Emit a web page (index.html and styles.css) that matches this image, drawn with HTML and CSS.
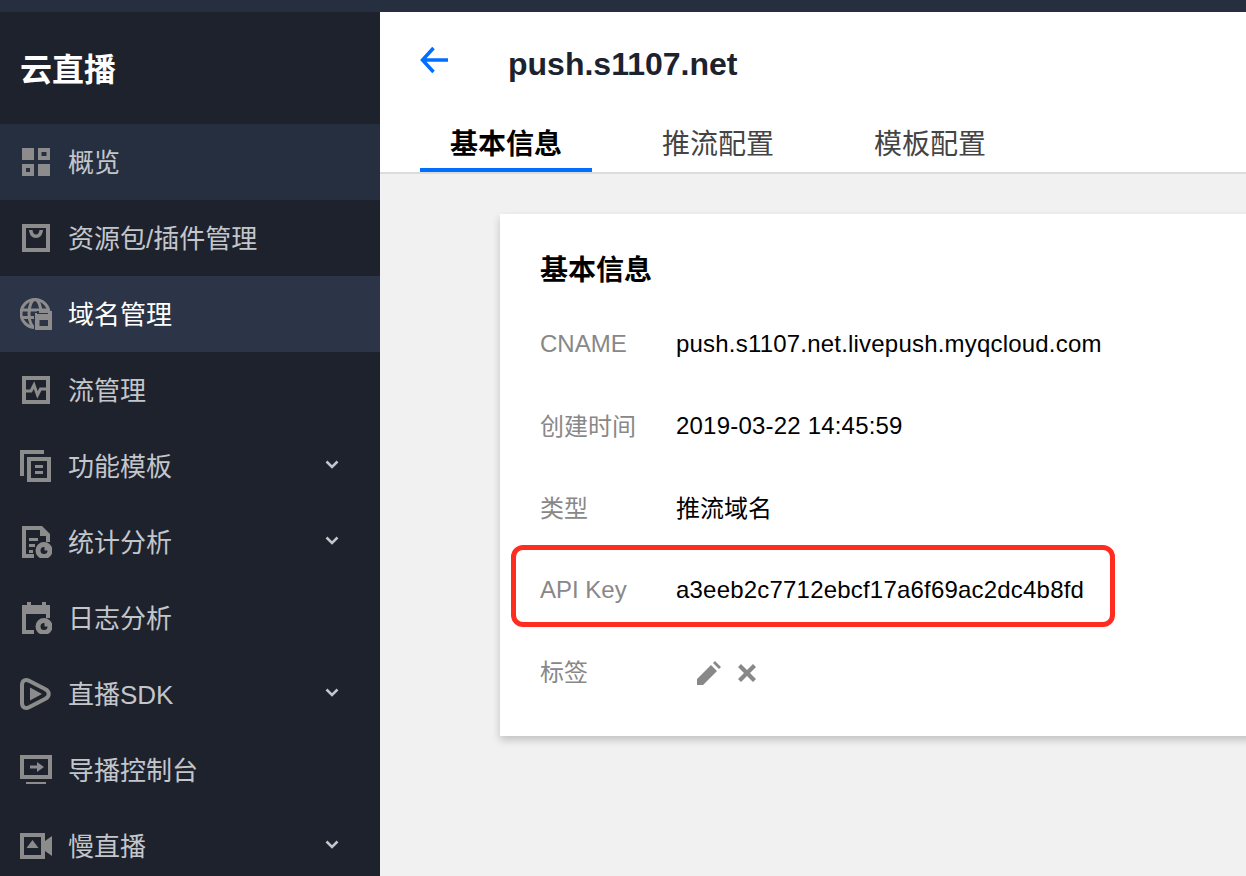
FILE: index.html
```html
<!DOCTYPE html>
<html lang="zh-CN">
<head>
  <meta charset="UTF-8">
  <title>云直播</title>
  <link rel="stylesheet" href="styles.css">
</head>
<body>
  <div class="top-strip"></div>
  <div class="layout">
    <aside class="sidebar">
      <div class="brand">云直播</div>
      <nav>
        <a class="nav-item hover">
          <svg class="nav-icon" viewBox="0 0 32 32"><path fill-rule="evenodd" d="M2 2h12v12H2zM18 2h12v12H18zM21.500 6v4h5V6zM2 18h12v12H2zM6 22v4h4v-4zM18 18h12v12H18z"/></svg>
          <span class="nav-text">概览</span>
        </a>
        <a class="nav-item">
          <svg class="nav-icon" viewBox="0 0 32 32"><path fill-rule="evenodd" d="M2 2h28v28H2zM6 6v20h20V6z"/><path d="M9 8h3.500c.4 3 1.600 4.500 3.500 4.500S19.100 11 19.500 8H23c-.5 5-3 8-7 8s-6.500-3-7-8z"/></svg>
          <span class="nav-text">资源包/插件管理</span>
        </a>
        <a class="nav-item active">
          <svg class="nav-icon" viewBox="0 0 32 32">
            <g fill="none" stroke-width="3">
              <circle cx="15" cy="15.500" r="14"/>
              <ellipse cx="15" cy="15.500" rx="6" ry="14"/>
              <path d="M1 12h28M1 19.500h28"/>
            </g>
            <path class="cut" d="M14 14h18v18H14z"/>
            <path fill-rule="evenodd" d="M15 15h2v-2h15v19H15zM19.500 22v6H28v-6z"/>
            <path class="cut" d="M17 13h11v3H17z"/>
            <path d="M19 12.500h9v2.500h-9zM17 18h15v2H17z"/>
          </svg>
          <span class="nav-text">域名管理</span>
        </a>
        <a class="nav-item">
          <svg class="nav-icon" viewBox="0 0 32 32"><path fill-rule="evenodd" d="M2 2h28v28H2zM6 6v20h20V6z"/><path fill="none" stroke-width="3" d="M6 17h5l3-6 3.500 10 3-6H26"/></svg>
          <span class="nav-text">流管理</span>
        </a>
        <a class="nav-item has-sub">
          <svg class="nav-icon" viewBox="0 0 32 32"><path d="M0 0h24v4H4v22H0z"/><path fill-rule="evenodd" d="M7 7h24v25H7zM11 11v17h16V11zM15 15h8v3h-8zM15 21h8v3h-8z"/></svg>
          <span class="nav-text">功能模板</span>
          <svg class="chevron" viewBox="0 0 14 10"><path d="M1.500 1.500 7 7l5.500-5.500"/></svg>
        </a>
        <a class="nav-item has-sub">
          <svg class="nav-icon" viewBox="0 0 32 32"><path fill-rule="evenodd" d="M2 0h20l8 8v8h-4v-6h-6V4H6v24h8v4H2z"/><path d="M9 12h9v3H9zM9 18h6v3H9zM9 24h4v3H9z"/><path fill-rule="evenodd" d="M24 16a8.500 8.500 0 1 1 0 17 8.500 8.500 0 0 1 0-17zm0 5a3.500 3.500 0 1 0 3.500 3.500h-3V21z"/></svg>
          <span class="nav-text">统计分析</span>
          <svg class="chevron" viewBox="0 0 14 10"><path d="M1.500 1.500 7 7l5.500-5.500"/></svg>
        </a>
        <a class="nav-item">
          <svg class="nav-icon" viewBox="0 0 32 32"><path fill-rule="evenodd" d="M7 0h4v3h11V0h4v3h4v13h-4v-4H6v16h8v4H2V3h5z"/><path fill-rule="evenodd" d="M24 16a8.500 8.500 0 1 1 0 17 8.500 8.500 0 0 1 0-17zm0 5a3.500 3.500 0 1 0 3.500 3.500h-3V21z"/></svg>
          <span class="nav-text">日志分析</span>
        </a>
        <a class="nav-item has-sub">
          <svg class="nav-icon" viewBox="0 0 32 32"><path fill="none" stroke-width="4" stroke-linejoin="round" d="M2 7c0-4.500 3.500-6 7-4.200l16 8.200c5 2.600 5 7.400 0 10L9 29.200C5.500 31 2 29.500 2 25z"/><path d="M10 9.500l12 6.500-12 6.500z"/></svg>
          <span class="nav-text">直播SDK</span>
          <svg class="chevron" viewBox="0 0 14 10"><path d="M1.500 1.500 7 7l5.500-5.500"/></svg>
        </a>
        <a class="nav-item">
          <svg class="nav-icon" viewBox="0 0 32 32"><path fill-rule="evenodd" d="M0 1h32v24H0zM4 5v16h24V5z"/><path d="M10 11.500h7V8l7 5-7 5v-3.500h-7zM6 28h20v2H6z"/></svg>
          <span class="nav-text">导播控制台</span>
        </a>
        <a class="nav-item has-sub">
          <svg class="nav-icon" viewBox="0 0 32 32"><path fill-rule="evenodd" d="M0 3h25v8l7-5v20l-7-5v8H0zM4 7v18h17V7z"/><path d="M12.500 10l6 8h-12z"/></svg>
          <span class="nav-text">慢直播</span>
          <svg class="chevron" viewBox="0 0 14 10"><path d="M1.500 1.500 7 7l5.500-5.500"/></svg>
        </a>
      </nav>
    </aside>

    <main class="content">
      <header class="page-head">
        <div class="title-row">
          <svg class="back" viewBox="0 0 28 28"><path d="M13.500 2 2.500 14l11 12M3 14h25"/></svg>
          <h1>push.s1107.net</h1>
        </div>
        <div class="tabs">
          <a class="tab current">基本信息</a>
          <a class="tab">推流配置</a>
          <a class="tab">模板配置</a>
        </div>
      </header>

      <section class="card">
        <h2>基本信息</h2>
        <div class="row"><label>CNAME</label><span class="value">push.s1107.net.livepush.myqcloud.com</span></div>
        <div class="row"><label class="zh">创建时间</label><span class="value">2019-03-22 14:45:59</span></div>
        <div class="row"><label class="zh">类型</label><span class="value zh">推流域名</span></div>
        <div class="row marked"><label>API Key</label><span class="value">a3eeb2c7712ebcf17a6f69ac2dc4b8fd</span></div>
        <div class="row">
          <label class="zh">标签</label>
          <span class="tag-actions">
            <svg viewBox="0 0 24 24"><path d="M0 24v-6L14 4l6 6L6 24zM16 2l2-2 6 6-2 2z"/></svg>
            <svg class="tag-remove" viewBox="0 0 24 24"><path d="M4 0l8 8 8-8 4 4-8 8 8 8-4 4-8-8-8 8-4-4 8-8-8-8z"/></svg>
          </span>
        </div>
      </section>
    </main>
  </div>
</body>
</html>
```

FILE: styles.css
```css
* { box-sizing: border-box; }

html, body {
  height: 100%;
  margin: 0;
  overflow: hidden;
}

body {
  background: #f1f1f1;
  color: #000;
  font-family: "Liberation Sans", "Noto Sans CJK SC", sans-serif;
}

.top-strip {
  height: 12px;
  background: #262f40;
}

.layout {
  display: flex;
  height: 864px;
}

/* sidebar */
.sidebar {
  flex: 0 0 380px;
  background: #1e222d;
  overflow: hidden;
}

.brand {
  height: 112px;
  padding-left: 20px;
  color: #fff;
  font-size: 32px;
  font-weight: 700;
  line-height: 116px;
}

.nav-item {
  display: flex;
  align-items: center;
  height: 76px;
  padding-left: 20px;
  color: #c3c6cb;
  font-size: 26px;
}
.nav-item.hover { background: #262f3f; }
.nav-item.active {
  background: #2c3447;
  color: #fff;
}

.nav-text { padding-bottom: 4px; }

.nav-icon {
  flex: none;
  width: 32px;
  height: 32px;
  margin-right: 16px;
  fill: #8c8c8c;
  stroke: #8c8c8c;
  stroke-width: 0;
}
.nav-icon .cut { fill: #2c3447; }

.chevron {
  width: 14px;
  height: 10px;
  margin-left: auto;
  margin-right: 41px;
  margin-top: -3px;
  fill: none;
  stroke: #c3c6cb;
  stroke-width: 2.5;
}

/* main area */
.content {
  flex: 1;
  min-width: 0;
}

.page-head {
  height: 162px;
  padding-left: 40px;
  background: #fff;
  border-bottom: 2px solid #dcdcdc;
}

.title-row {
  display: flex;
  align-items: center;
  height: 104px;
}

.back {
  width: 28px;
  height: 28px;
  margin-right: 60px;
  margin-top: -8px;
  fill: none;
  stroke: #006eff;
  stroke-width: 3.5;
}

h1 {
  margin: 0;
  color: #1c222e;
  font-size: 32px;
  font-weight: 700;
}

.tabs {
  display: flex;
  gap: 40px;
  height: 56px;
}

.tab {
  height: 56px;
  padding: 0 30px;
  color: #444;
  font-size: 28px;
  line-height: 58px;
}
.tab.current {
  color: #000;
  font-weight: 700;
  border-bottom: 4px solid #006eff;
}

.card {
  width: 800px;
  height: 522px;
  margin: 40px 0 0 120px;
  padding: 0 40px;
  background: #fff;
  box-shadow: 0 4px 8px rgba(0, 0, 0, 0.2);
}

h2 {
  margin: 0;
  height: 89px;
  font-size: 28px;
  font-weight: 700;
  line-height: 114px;
}

.row {
  display: flex;
  align-items: center;
  height: 82px;
  font-size: 24px;
}

.row label {
  flex: 0 0 136px;
  color: #888;
}

.value { letter-spacing: 0.2px; }

.row .zh {
  padding-bottom: 4px;
  letter-spacing: 0;
}

.marked { position: relative; }
.marked::after {
  content: "";
  box-sizing: border-box;
  position: absolute;
  left: -29px;
  top: -4px;
  width: 604px;
  height: 82px;
  border: 5px solid #ff2d20;
  border-radius: 12px;
}

.tag-actions {
  display: flex;
  align-items: center;
  gap: 17px;
  padding-left: 21px;
  padding-top: 2px;
}
.tag-actions svg {
  width: 24px;
  height: 24px;
  fill: #888;
}
.tag-actions .tag-remove {
  width: 18px;
  height: 18px;
}
```
